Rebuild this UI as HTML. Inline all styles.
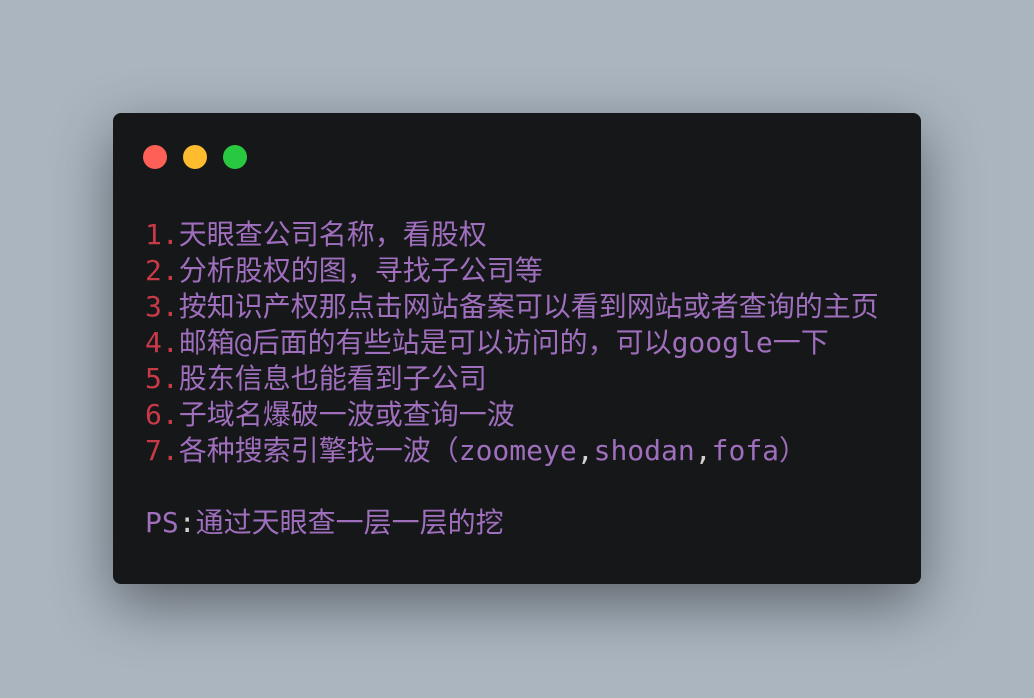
<!DOCTYPE html>
<html><head><meta charset="utf-8"><style>
html,body{margin:0;padding:0;}
body{width:1034px;height:698px;background:#aab5c0;position:relative;overflow:hidden;}
.win{position:absolute;left:113px;top:113px;width:808px;height:471px;background:#161719;border-radius:8px;box-shadow:0 20px 60px rgba(0,0,0,0.45);}
.dot{position:absolute;top:32px;width:24px;height:24px;border-radius:50%;}
.code{position:absolute;left:32px;top:104px;font-family:"DejaVu Sans Mono","Noto Sans CJK SC",monospace;font-size:28px;line-height:36px;color:#9f6fbd;white-space:pre;}
.n{color:#c93a48;}
.w{color:#d0d0d0;}
</style></head><body>
<div class="win">
<div class="dot" style="left:30px;background:#fe5f57"></div>
<div class="dot" style="left:70px;background:#febc2e"></div>
<div class="dot" style="left:110px;background:#28c840"></div>
<div class="code"><span class="n">1.</span>天眼查公司名称，看股权
<span class="n">2.</span>分析股权的图，寻找子公司等
<span class="n">3.</span>按知识产权那点击网站备案可以看到网站或者查询的主页
<span class="n">4.</span>邮箱@后面的有些站是可以访问的，可以google一下
<span class="n">5.</span>股东信息也能看到子公司
<span class="n">6.</span>子域名爆破一波或查询一波
<span class="n">7.</span>各种搜索引擎找一波（zoomeye<span class="w">,</span>shodan<span class="w">,</span>fofa）

PS<span class="w">:</span>通过天眼查一层一层的挖</div>
</div>
</body></html>
